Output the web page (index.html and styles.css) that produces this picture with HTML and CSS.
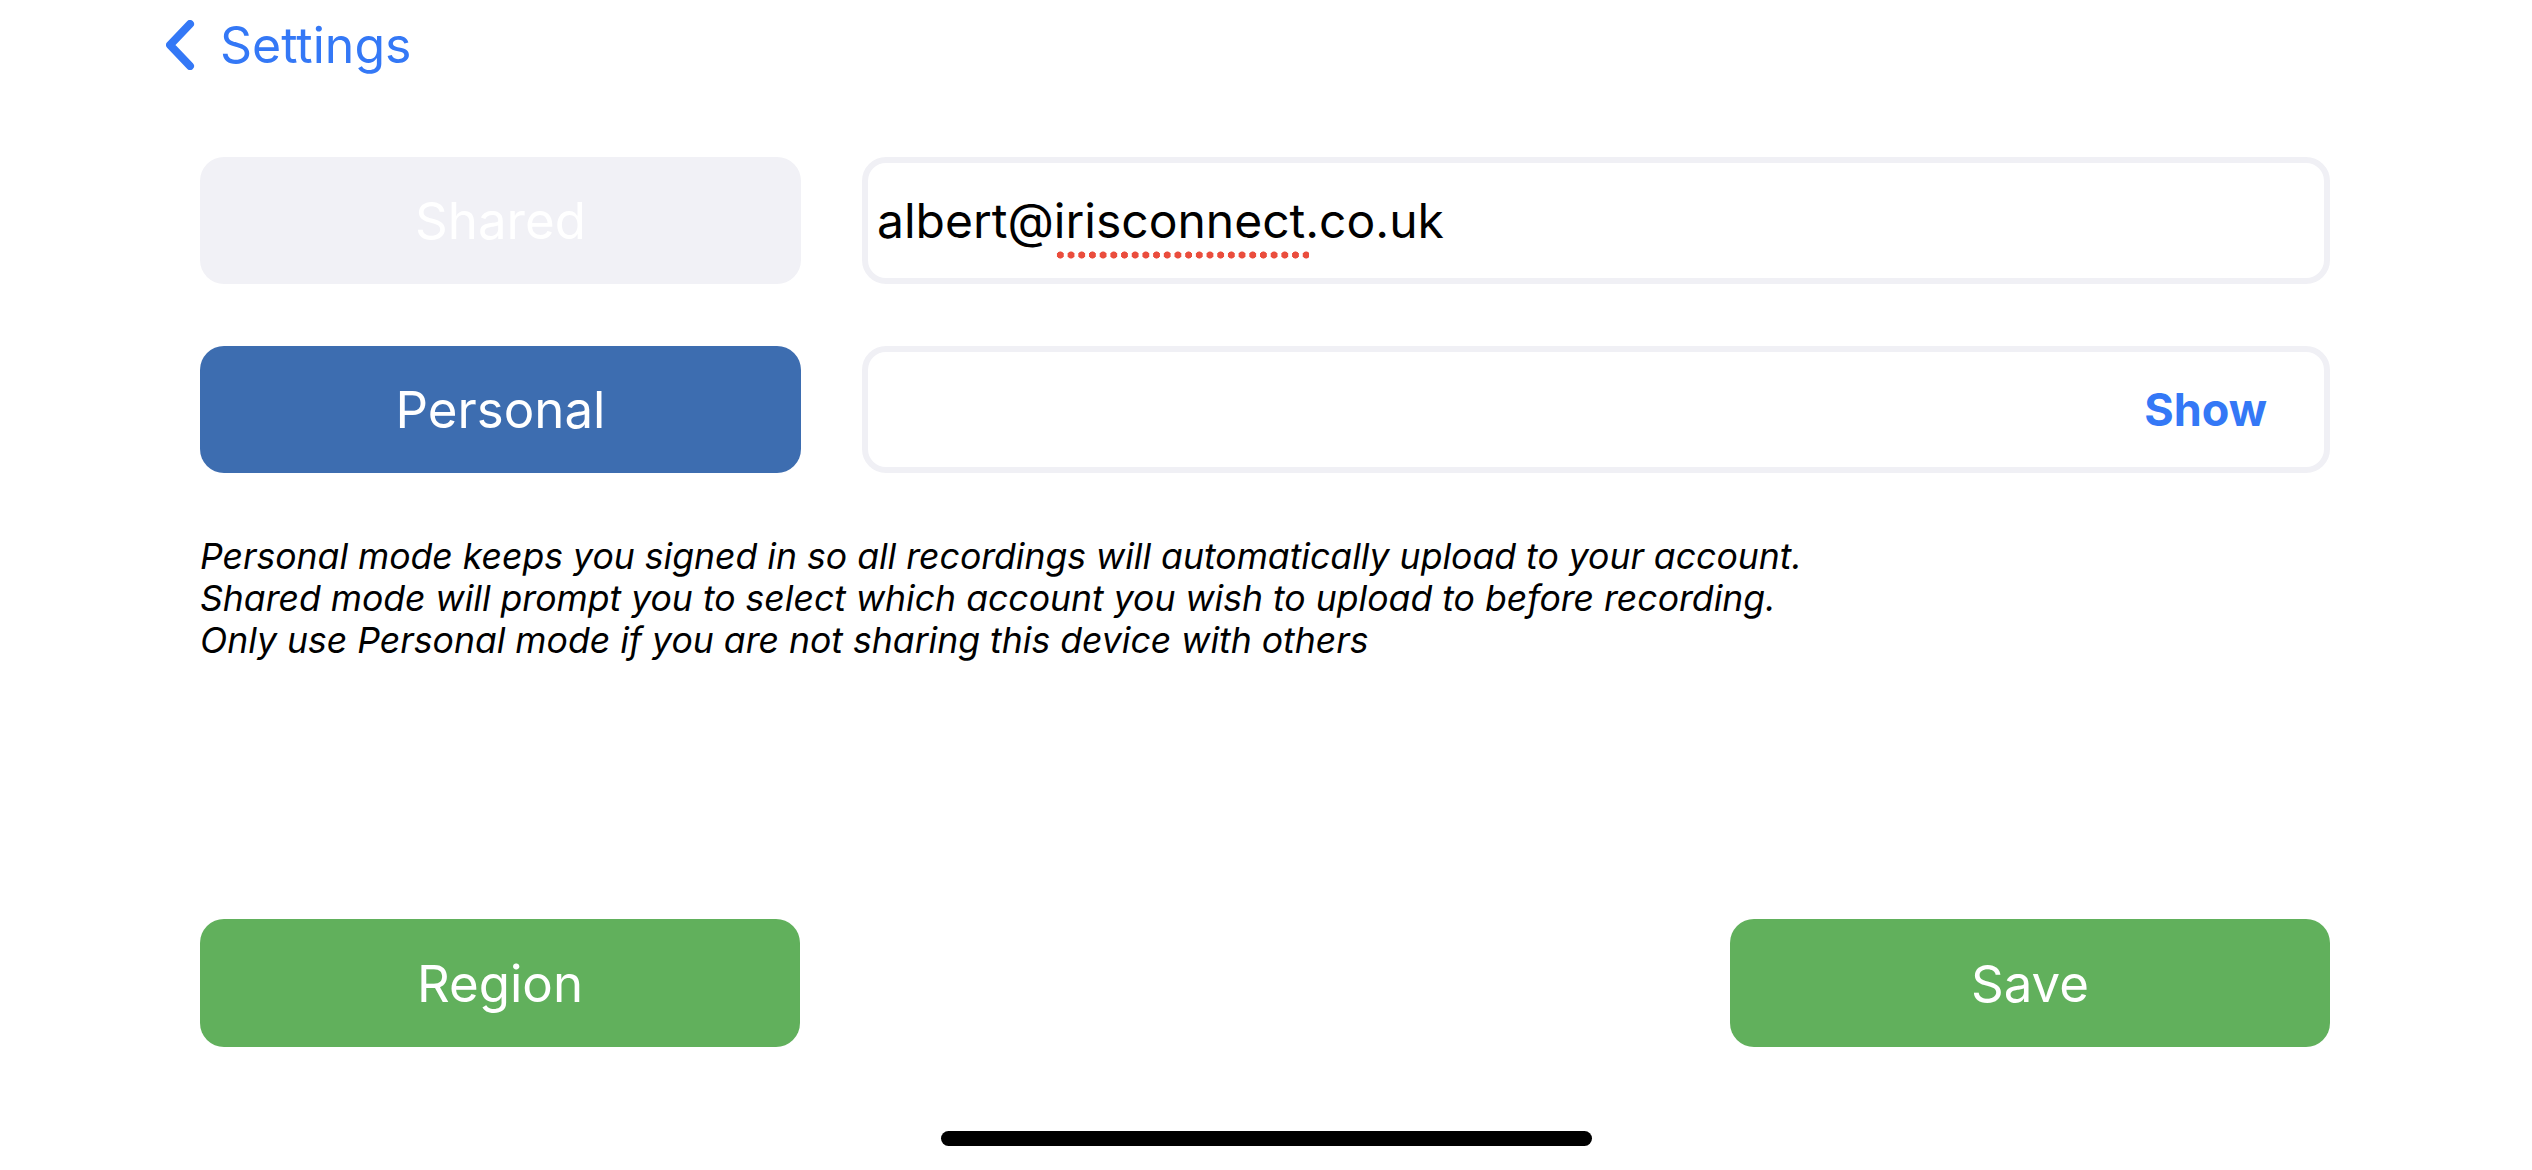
FILE: index.html
```html
<!DOCTYPE html>
<html lang="en">
<head>
<meta charset="utf-8">
<title>Account</title>
<link rel="stylesheet" href="styles.css">
</head>
<body>
<div class="screen">
  <header class="nav">
    <a class="back" href="#">
      <svg class="chev" width="30" height="50" viewBox="0 0 30 50"><path d="M24 4 L4 25 L24 46" fill="none" stroke="#3478f6" stroke-width="8" stroke-linecap="round" stroke-linejoin="round"/></svg>
      <span class="back-label">Settings</span>
    </a>
  </header>
  <main class="content">
    <div class="form-grid">
      <button class="mode mode-off">Shared</button>
      <div class="field"><span class="value">albert@<span class="misspelt">irisconnect</span>.co.uk</span></div>
      <button class="mode mode-on">Personal</button>
      <div class="field field-pass"><span class="show">Show</span></div>
    </div>
    <p class="desc">Personal mode keeps you signed in so all recordings will automatically upload to your account.<br>Shared mode will prompt you to select which account you wish to upload to before recording.<br>Only use Personal mode if you are not sharing this device with others</p>
    <div class="actions">
      <button class="action">Region</button>
      <button class="action">Save</button>
    </div>
  </main>
  <div class="home-indicator"></div>
</div>
</body>
</html>
```
FILE: styles.css
```css
html, body {
  margin: 0;
  padding: 0;
  background: #ffffff;
}
.screen {
  width: 2532px;
  height: 1170px;
  display: flex;
  flex-direction: column;
  font-family: Inter, "Liberation Sans", sans-serif;
  overflow: hidden;
}
.nav {
  height: 90px;
  display: flex;
  align-items: center;
  padding-left: 166px;
}
.back {
  display: flex;
  align-items: center;
  gap: 24px;
  text-decoration: none;
  color: #3478f6;
}
.chev {
  display: block;
}
.back-label {
  font-size: 50px;
  line-height: 60px;
}
.content {
  margin-left: 200px;
  width: 2130px;
  padding-top: 67px;
  display: flex;
  flex-direction: column;
}
.form-grid {
  display: grid;
  grid-template-columns: 601px 1fr;
  grid-auto-rows: 127px;
  column-gap: 61px;
  row-gap: 62px;
}
.mode, .action {
  border: none;
  border-radius: 24px;
  font-family: Inter, "Liberation Sans", sans-serif;
  font-size: 51px;
  color: #ffffff;
  padding: 0;
  margin: 0;
}
.mode-off {
  background: #f1f1f6;
}
.mode-on {
  background: #3d6db0;
}
.field {
  border: 6px solid #f0f0f5;
  border-radius: 24px;
  display: flex;
  align-items: center;
  padding: 0 0 0 9px;
}
.value {
  font-size: 48px;
  color: #000000;
}
.misspelt {
  position: relative;
}
.misspelt::after {
  content: "";
  position: absolute;
  left: 1px;
  right: -4px;
  bottom: -9px;
  height: 8px;
  background-image: radial-gradient(circle, #ea4d3d 3.3px, transparent 3.8px);
  background-size: 10.7px 8px;
  background-repeat: repeat-x;
}
.field-pass {
  justify-content: flex-end;
  padding-right: 57px;
}
.show {
  font-size: 45px;
  font-weight: 700;
  color: #3478f6;
}
.desc {
  margin: 63px 0 0 0;
  font-size: 35.6px;
  line-height: 42px;
  font-style: italic;
  color: #000000;
}
.actions {
  margin-top: 257px;
  display: flex;
  justify-content: space-between;
}
.action {
  width: 600px;
  height: 128px;
  background: #61b05c;
}
.home-indicator {
  margin: 84px auto 0 auto;
  width: 651px;
  height: 15px;
  border-radius: 8px;
  background: #000000;
}
```
